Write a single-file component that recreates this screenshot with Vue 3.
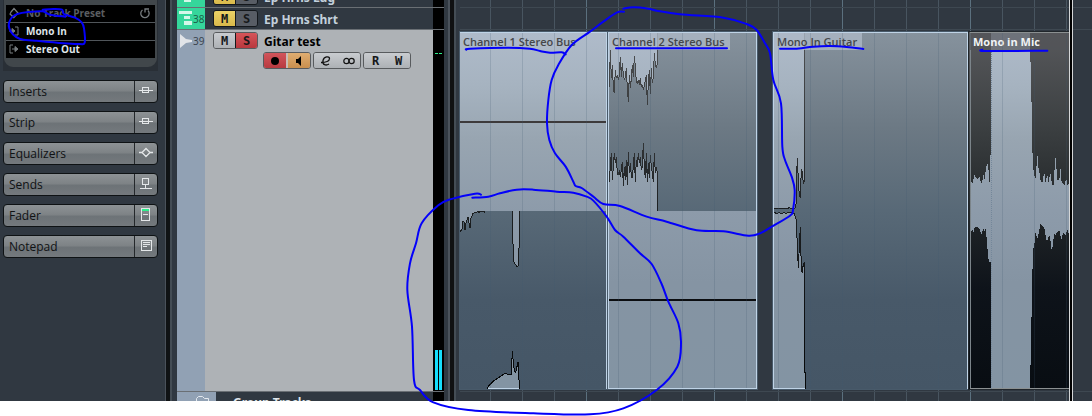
<script setup>
const routes = [
  { icon: 'preset', label: 'No Track Preset', muted: true },
  { icon: 'input', label: 'Mono In' },
  { icon: 'output', label: 'Stereo Out' },
]
const sections = ['Inserts', 'Strip', 'Equalizers', 'Sends', 'Fader', 'Notepad']

const clips = [
  {
    name: 'Channel 1 Stereo Bus', kind: 'plain', box: '180 96 441 1071',
    light: [
      '180,96 621,96 621,633 180,633',
      '180,633 180,695 186,688 186,665 192,665 195,690 198,670 204,652 210,685 213,655 219,640 228,638 240,634 255,633',
      '337,633 340,777 343,790 352,800 355,798 358,720 358,633',
      '262,1167 265,1158 280,1143 300,1130 315,1120 330,1125 334,1123 337,1053 340,1090 343,1110 346,1117 350,1110 352,1090 355,1085 358,1167',
    ],
    lines: [
      '180,695 186,688 186,665 192,665 195,690 198,670 204,652 210,685 213,655 219,640 228,638 234,634 237,638 240,634 252,634 255,638',
      '337,633 340,777 343,790 352,800 355,798 358,720 358,633',
      '262,1167 265,1158 280,1143 300,1130 315,1120 330,1125 334,1123 337,1053 340,1090 343,1110 346,1117 350,1110 352,1090 355,1085 358,1167',
    ],
    bars: [{ x: 180, y: 363, w: 438, c: '#3d3a3b' }],
    edges: ['180,97 621,97', '619,96 619,1167', '265,1165 357,1165'],
  },
  {
    name: 'Channel 2 Stereo Bus', kind: 'tinted', box: '54 96 447 1071',
    light: [
      '54,633 501,633 501,1167 54,1167',
      '54,96 203,96 202,150 199,205 196,195 193,160 190,230 187,250 184,205 181,282 178,210 175,250 172,315 169,225 166,240 163,255 160,270 157,255 154,262 151,235 148,255 145,240 142,250 139,245 136,200 133,168 130,230 127,195 124,235 121,265 118,225 115,305 112,265 109,205 106,230 103,240 100,225 97,190 94,230 91,170 88,225 85,240 82,225 79,235 76,210 73,280 70,262 67,195 64,235 61,150 58,262 54,262',
      '54,633 54,545 58,545 61,500 64,460 67,540 70,500 73,460 76,490 79,470 82,520 85,525 88,510 91,530 94,510 97,485 100,558 103,500 106,540 109,480 112,555 115,455 118,520 121,490 124,530 127,535 130,500 133,460 136,545 139,480 142,500 145,460 148,490 151,470 154,510 157,500 160,428 163,500 166,535 169,460 172,545 175,490 178,535 181,465 184,500 187,520 190,545 193,460 196,520 199,500 202,520 203,633',
    ],
    lines: [
      '203,100 203,186 199,205 196,195 193,160 190,230 187,250 184,205 181,282 178,210 175,250 172,315 169,225 166,240 163,255 160,270 157,255 154,262 151,235 148,255 145,240 142,250 139,245 136,200 133,168 130,230 127,195 124,235 121,265 118,225 115,305 112,265 109,205 106,230 103,240 100,225 97,190 94,230 91,170 88,225 85,240 82,225 79,235 76,210 73,280 70,262 67,195 64,235 61,150 58,262',
      '58,545 61,500 64,460 67,540 70,500 73,460 76,490 79,470 82,520 85,525 88,510 91,530 94,510 97,485 100,558 103,500 106,540 109,480 112,555 115,455 118,520 121,490 124,530 127,535 130,500 133,460 136,545 139,480 142,500 145,460 148,490 151,470 154,510 157,500 160,428 163,500 166,535 169,460 172,545 175,490 178,535 181,465 184,500 187,520 190,545 193,460 196,520 199,500 202,520 203,633',
    ],
    bars: [{ x: 57, y: 897, w: 441, c: '#0b0d10' }],
    edges: ['54,97 501,97', '55,96 55,1167', '499,96 499,1167', '54,1165 501,1165'],
  },
  {
    name: 'Mono In Guitar', kind: 'tinted', box: '39 96 585 1071',
    light: [
      '39,96 134,96 133,545 130,550 127,515 124,508 121,592 118,590 115,540 112,475 109,550 109,605 106,624 39,626',
      '39,640 103,640 109,660 112,740 115,804 118,740 121,680 124,810 127,820 130,790 133,788 134,1118 137,1167 39,1167',
    ],
    lines: [
      '134,100 133,545 130,550 127,515 124,508 121,592 118,590 115,540 112,475 109,550 109,605 106,624 90,624 87,621 84,626 72,624 69,626 60,624 54,626 42,626',
      '42,638 51,640 57,637 63,641 72,638 78,640 87,638 103,640 109,660 112,740 115,804 118,740 121,680 124,810 127,820 130,790 133,788 134,1118 137,1118 137,1167',
    ],
    bars: [],
    edges: ['39,97 624,97', '40,96 40,1167', '622,96 622,1167', '39,1165 135,1165'],
  },
  {
    name: 'Mono in Mic', kind: 'dark', box: '117 96 303 1071',
    light: [
      '123,545 127,550 130,540 133,525 142,538 148,530 154,550 158,538 160,522 163,540 168,505 172,489 175,498 177,545 180,545 181,465 184,465 184,99 301,99 301,165 304,275 307,447 310,507 316,540 319,505 322,462 325,500 328,515 331,540 337,548 343,516 346,548 352,522 355,550 361,519 364,540 370,563 373,520 376,468 379,500 382,540 388,540 391,501 394,540 397,550 403,556 406,545 409,537 412,556 418,550 418,705 412,690 406,705 400,697 397,705 394,720 388,690 382,697 376,705 373,700 370,720 367,747 363,745 361,715 358,705 352,720 349,720 343,685 340,680 331,670 328,690 322,717 316,697 313,735 310,745 309,805 306,810 306,950 303,955 303,1095 300,1095 300,1167 183,1167 183,787 177,787 174,765 171,730 168,690 165,682 163,697 160,685 154,703 150,690 142,680 134,683 130,697 127,687 123,695',
    ],
    lines: [], bars: [],
    edges: ['120,97 420,97', '121,99 121,1164', '120,1165 420,1165'],
  },
]

// Freehand pen marks: each stroke is a point list with its own horizontal origin.
const strokes = [
  { x: 0, p: [[128,29],[160,27],[186,29],[192,42],[225,53],[245,67],[252,85],[254,128],[238,132],[190,130],[105,122],[60,117],[38,102],[28,85],[27,68],[36,52],[52,42],[85,36],[128,34],[150,44],[196,50]] },
  { x: 1200, p: [[199,149],[210,146],[325,143],[390,146],[420,153],[450,158],[485,157],[497,163]] },
  { x: 1770, p: [[102,35],[80,38],[40,65],[0,95],[-55,135],[-95,195],[-115,240],[-125,300],[-129,370],[-122,420],[-105,460],[-73,500],[-50,545],[-43,558],[-25,564],[10,590],[40,612],[90,618],[170,650],[230,665],[320,691],[400,694],[475,707],[510,700],[545,680],[600,647],[609,630],[614,570],[605,530],[585,480],[577,440],[573,310],[550,240],[540,160],[525,130],[500,90],[470,72],[400,53],[270,43],[200,32],[175,26],[130,22],[100,26]] },
  { x: 1770, p: [[-353,593],[-305,590],[-270,580],[-220,569],[-170,569],[-100,575],[-50,578],[-10,590],[10,602],[50,650],[75,690],[100,710],[150,760],[185,792],[215,852],[235,905],[265,970],[273,1030],[262,1100],[200,1170],[100,1225],[0,1243],[-170,1240],[-365,1230],[-470,1207],[-510,1170],[-528,1140],[-534,980],[-548,870],[-540,790],[-522,730],[-505,670],[-455,616],[-420,598],[-345,581],[-327,584]] },
  { x: 1770, p: [[78,145],[411,145]] },
  { x: 2280, p: [[60,146],[105,146],[160,140],[210,138],[260,141],[310,147]] },
  { x: 2790, p: [[157,149],[168,153],[352,152]] },
]
function smooth({ x, p }) {
  const q = p.map(([a, b]) => [a + x, b])
  let d = `M${q[0]}`
  for (let i = 0; i < q.length - 1; i++) {
    const a = q[i - 1] || q[i], b = q[i], c = q[i + 1], e = q[i + 2] || c
    d += `C${b[0] + (c[0] - a[0]) / 6},${b[1] + (c[1] - a[1]) / 6} ${c[0] - (e[0] - b[0]) / 6},${c[1] - (e[1] - b[1]) / 6} ${c}`
  }
  return d
}
</script>

<template>
  <div class="page">
    <main class="daw">
      <aside class="inspector">
        <section class="rack">
          <div class="routing">
            <button v-for="r in routes" :key="r.label" class="route" :class="{ muted: r.muted }">
              <svg width="12" height="12" viewBox="0 0 12 12" fill="none" stroke="currentColor">
                <path v-if="r.icon === 'preset'" d="M3 5 6 1.500 10 6 6 10.500 2 7z M3 8 6 11" stroke-width="1.200" />
                <template v-else-if="r.icon === 'input'"><path d="M7 2h3v8H7M1 6h5" /><path d="M4 3.500 7 6 4 8.500z" fill="currentColor" /></template>
                <template v-else><path d="M5 2H2v8h3M4 6h4" /><path d="M7 3.500 10 6 7 8.500z" fill="currentColor" /></template>
              </svg>
              <span>{{ r.label }}</span>
              <svg v-if="r.muted" class="reload" width="12" height="12" viewBox="0 0 12 12" fill="none" stroke="currentColor" stroke-width="1.300"><path d="M3.500 3A4.200 4.200 0 1 0 9 3.500M6 5.500V2H10" /></svg>
            </button>
          </div>
        </section>
        <nav class="sections">
          <button v-for="s in sections" :key="s" class="section">
            <span class="section-name">{{ s }}</span>
            <span class="section-icon">
              <svg width="16" height="15" viewBox="0 0 16 15" fill="none" stroke="#e4e7e9" shape-rendering="crispEdges">
                <path v-if="s === 'Inserts' || s === 'Strip'" d="M1 7.500H15M4.500 4.500h6v5h-6z" />
                <g v-else-if="s === 'Equalizers'" shape-rendering="auto"><path d="M1 7.500h3M12 7.500h3M8 3.500 12 7.500 8 11.500 4 7.500z" stroke-width="1.300" /></g>
                <path v-else-if="s === 'Sends'" d="M4.500 2.500h6v6h-6zM7.500 9v3M2 12.500h12" />
                <g v-else-if="s === 'Fader'"><path d="M3.500 1.500h8v12h-8zM5 7.500h5" /><path d="M4 3h7" stroke="#2df08c" stroke-width="2" /></g>
                <path v-else d="M3.500 2.500h10v10h-10zM5 4.500h7M5 6.500h7M5 8.500h4" />
              </svg>
            </span>
          </button>
        </nav>
      </aside>
      <div class="divider"></div>

      <section class="tracks">
        <article class="track cut">
          <div class="color green"><svg width="16" height="13" viewBox="0 0 16 13" fill="#d5f7e9"><path d="M2 0h12v3H2zM6 5h7v3H6zM6 10h7v3H6z" /></svg></div>
          <div class="controls">
            <div class="top"><div class="pair"><button class="mute on">M</button><button>S</button></div><span class="name">Ep Hrns Lug</span></div>
          </div>
          <div class="meter"></div>
        </article>
        <article class="track">
          <div class="color green"><svg width="16" height="14" viewBox="0 0 16 14" fill="#d5f7e9"><path d="M1 0h13v3H1zM6 5h6v3H6zM6 10h8v4H6z" /></svg><span>38</span></div>
          <div class="controls">
            <div class="top"><div class="pair"><button class="mute on">M</button><button>S</button></div><span class="name">Ep Hrns Shrt</span></div>
          </div>
          <div class="meter"></div>
        </article>
        <article class="track selected">
          <div class="color"><svg width="16" height="16" viewBox="0 0 16 16" fill="#e1e4e8"><path d="M2 1 8 6 14 7v2L8 10 2 15z" /></svg><span>39</span></div>
          <div class="controls">
            <div class="top"><div class="pair"><button>M</button><button class="solo on">S</button></div><span class="name">Gitar test</span></div>
            <div class="extra">
              <div class="pair"><button class="rec" aria-label="Record"><svg width="12" height="12" viewBox="0 0 12 12"><circle cx="6" cy="6" r="4" /></svg></button><button class="mon" aria-label="Monitor"><svg width="12" height="12" viewBox="0 0 12 12"><path d="M3 4h2l3-3v10L5 8H3z" /></svg></button></div>
              <div class="pair"><button aria-label="Edit"><svg width="12" height="12" viewBox="0 0 12 12" fill="none" stroke="#111" stroke-width="1.300"><path d="M1 7.500C6 7.500 9.500 6 9.500 3.500 9.500 1 4 1 3 5.500c-.8 4.500 3 5.500 6 3.500" /></svg></button><button aria-label="Stereo"><svg width="12" height="12" viewBox="0 0 12 12" fill="none" stroke="#111" stroke-width="1.200"><circle cx="3.500" cy="6" r="2.700" /><circle cx="8.500" cy="6" r="2.700" /></svg></button></div>
              <div class="pair"><button>R</button><button>W</button></div>
            </div>
          </div>
          <div class="meter live"><i></i><i></i></div>
        </article>
        <article class="group">
          <div class="folder"><svg width="16" height="12" viewBox="0 0 16 12" fill="none" stroke="#e4e9ef"><path d="M1.500 11.500v-9l2-2h4l2 2h4v9z" /></svg></div>
          <span class="name">Group Tracks</span>
          <div class="meter"></div>
        </article>
      </section>
      <div class="divider right"></div>

      <section class="timeline">
        <div class="lane">
          <figure v-for="(c, i) in clips" :key="c.name" class="clip" :class="[c.kind, 'c' + i]">
            <svg :viewBox="c.box" preserveAspectRatio="none" shape-rendering="crispEdges">
              <rect x="0" y="96" width="700" height="1071" :fill="c.kind === 'dark' ? 'url(#night)' : 'url(#slate)'" />
              <polygon v-for="(p, k) in c.light" :key="'a' + k" :points="p" fill="url(#pale)" />
              <polyline v-for="(p, k) in c.edges" :key="'e' + k" :points="p" fill="none" :stroke="c.kind === 'dark' ? '#8b9091' : '#bfd3e6'" stroke-width="3" />
              <polyline v-for="(p, k) in c.lines" :key="'l' + k" :points="p" fill="none" stroke="url(#ink)" stroke-width="3" stroke-linejoin="bevel" />
              <rect v-for="(b, k) in c.bars" :key="'b' + k" :x="b.x" :y="b.y" :width="b.w" height="6" :fill="b.c" />
              <path v-if="c.kind === 'dark'" d="M184 156V1167" stroke="#74879a" stroke-width="3" stroke-dasharray="3 3" />
            </svg>
            <figcaption>{{ c.name }}</figcaption>
          </figure>
        </div>
        <div class="cursor"></div>
      </section>
    </main>

    <svg class="marks" viewBox="0 0 3276 1248" preserveAspectRatio="none" fill="none">
      <defs>
        <linearGradient id="pale" gradientUnits="userSpaceOnUse" x1="0" y1="96" x2="0" y2="1167"><stop offset="0" stop-color="#afbbca" /><stop offset=".15" stop-color="#a6b3c0" /><stop offset=".3" stop-color="#98a5b1" /><stop offset=".5" stop-color="#8d9baa" /><stop offset=".7" stop-color="#8594a3" /><stop offset="1" stop-color="#8394a3" /></linearGradient>
        <linearGradient id="slate" gradientUnits="userSpaceOnUse" x1="0" y1="96" x2="0" y2="1167"><stop offset="0" stop-color="#86929d" /><stop offset=".27" stop-color="#6c7984" /><stop offset=".5" stop-color="#586977" /><stop offset=".75" stop-color="#485969" /><stop offset="1" stop-color="#455666" /></linearGradient>
        <linearGradient id="night" gradientUnits="userSpaceOnUse" x1="0" y1="96" x2="0" y2="1167"><stop offset="0" stop-color="#58595c" /><stop offset=".27" stop-color="#3b3f41" /><stop offset=".5" stop-color="#222628" /><stop offset=".72" stop-color="#0e131a" /><stop offset="1" stop-color="#080d12" /></linearGradient>
        <linearGradient id="ink" gradientUnits="userSpaceOnUse" x1="0" y1="96" x2="0" y2="1167"><stop offset="0" stop-color="#505254" /><stop offset=".5" stop-color="#1c1f21" /><stop offset="1" stop-color="#050708" /></linearGradient>
      </defs>
      <path v-for="(s, i) in strokes" :key="i" :d="smooth(s)" />
    </svg>
  </div>
</template>

<style>
body { background: #fff; }
</style>

<style scoped>
* { box-sizing: border-box; }
button { margin: 0; padding: 0; border: 0; background: none; font: inherit; color: inherit; }
.page { position: relative; padding-bottom: 15px; font-family: "Noto Sans", "Open Sans", sans-serif; font-size: 11px; }
.daw { display: flex; background: #303841; overflow: hidden; }
.marks { position: absolute; inset: 0; width: 100%; height: 100%; pointer-events: none; }
.marks path { stroke: #0400fa; stroke-width: 6; stroke-linecap: round; stroke-linejoin: round; }

.inspector { flex: 0 0 165px; padding: 0 7px 0 3px; }
.rack { padding: 0 1px 4px; background: #292f36; }
.routing { border: solid #41474b; border-width: 5px 2px 9px; border-radius: 0 0 9px 9px; background: #000; }
.route { display: flex; align-items: center; gap: 6px; width: 100%; height: 18px; padding: 0 4px 1px 2px; color: #777c7f; border-bottom: 1px solid #51565a; text-align: left; font: bold 10px/16px "Open Sans", sans-serif; }
.route:last-child { height: 17px; border-bottom: 0; }
.route span { flex: 1; color: #dfe4e8; }
.route.muted span { color: #5b5e60; }
.sections { display: flex; flex-direction: column; gap: 8px; padding-top: 9px; }
.section { display: flex; height: 23px; border: 1px solid #0e1214; border-radius: 4px; background: linear-gradient(#8d9295, #7e8386 45%, #6d7377 55%, #74797d); color: #101214; text-align: left; }
.section-name { flex: 1; padding-left: 5px; font-size: 12px; font-family: "Open Sans", sans-serif; line-height: 22px; }
.section-icon { display: flex; justify-content: center; width: 23px; height: 21px; padding-top: 2px; border-left: 1px solid #24282b; }

.divider { flex: 0 0 12px; background: linear-gradient(90deg, #4a525b 1px, #101315 1px 5px, #444d55 5px 7px, #303841 7px); }
.divider.right { flex-basis: 16px; background: linear-gradient(90deg, #303841 4px, #4a525b 4px 6px, #101112 6px 10px, #444d55 10px 12px, #303841 12px); }

.tracks { flex: 0 0 267px; }
.track { display: flex; height: 22px; border-bottom: 1px solid #6a6f74; color: #c3d0dc; }
.track.cut { height: 8px; align-items: flex-end; overflow: hidden; }
.track.cut > * { height: 21px; }
.color { display: flex; gap: 1px; flex: 0 0 28px; padding: 3px 0 0 1px; background: #91a1b4; color: #3b444e; font-size: 10px; line-height: 16px; }
.color.green { background: #35d69b; color: #1b5f48; }
.color span { margin-left: -2px; }
.controls { flex: 1; padding: 2px 0 0 8px; }
.top { display: flex; align-items: center; gap: 6px; height: 17px; }
.name { padding-top: 1px; font: bold 12px/17px "Noto Sans", sans-serif; }
.pair { display: flex; width: 45px; height: 17px; border: 1px solid #14181c; border-radius: 3px; overflow: hidden; }
.pair button { flex: 1; display: flex; align-items: center; justify-content: center; padding-top: 1px; background: #585d65; color: #15181a; font: bold 12px/14px "DejaVu Sans Mono", monospace; }
.pair button + button { border-left: 1px solid #14181c; }
.pair .mute.on { background: linear-gradient(#ecd266, #d9b94b); }
.pair .solo.on { background: linear-gradient(#d65459, #b9383e); }
.selected { height: 362px; background: #aeb2b6; color: #000; }
.selected .pair { border-color: #585b5e; }
.selected .pair button { background: linear-gradient(#c9ccd0, #adb1b5); }
.selected .pair .solo.on { background: linear-gradient(#d65459, #b9383e); }
.extra { display: flex; gap: 2px; padding: 3px 0 0 50px; }
.extra .pair { width: 48px; }
.extra .pair button + button { border-left: 0; }
.selected .pair .rec { background: linear-gradient(#d2555b, #b83a40); }
.selected .extra .pair .mon { background: linear-gradient(#e0ad71, #c98f4e); border-left: 2px solid #c8bdb6; }
.meter { display: flex; gap: 1px; align-items: flex-end; flex: 0 0 11px; padding: 0 2px 1px; background: #000; }
.live i { flex: 1; height: 337px; background: linear-gradient(#2df08c 1px, transparent 1px 297px, #16dcfb 297px); }
.group { display: flex; height: 9px; overflow: hidden; color: #dfe5ea; }
.folder { flex: 0 0 39px; padding: 4px 0 0 18px; background: #91a1b4; }
.folder svg { display: block; }
.group .name { flex: 1; padding: 2px 0 0 17px; }

.timeline { position: relative; flex: 1; padding-top: 32px; background:
  linear-gradient(#3e4851, #3e4851) 0 7px / 100% 1px no-repeat,
  linear-gradient(#3e4851, #3e4851) 0 29px / 100% 1px no-repeat,
  linear-gradient(#3e4851, #3e4851) 0 391px / 100% 1px no-repeat,
  linear-gradient(90deg, #5b707e 1px, transparent 1px) 126px 0 / 128px 100%,
  linear-gradient(90deg, #485560 1px, transparent 1px) 30px 0 / 32px 100%, #303841; }
.lane { position: relative; display: grid; grid-template-columns: 147fr 1fr 149fr 16fr 195fr 1fr 101fr 22fr; }
.lane::after { content: ""; position: absolute; inset: 1px 0; background: linear-gradient(90deg, rgba(64, 88, 110, .2) 1px, transparent 1px) 30px 0 / 32px 100%; }
.clip { position: relative; margin: 0; box-shadow: 0 0 0 1px #485a6a; }
.clip svg { display: block; width: 100%; height: 357px; }
.c1 { grid-column: 3; }
.c2 { grid-column: 5; }
.c3 { grid-column: 7; }
.clip figcaption { position: absolute; top: 1px; left: 0; height: 17px; padding: 0 5px 0 3px; color: #45474a; font: 600 11px/17px "Open Sans", sans-serif; white-space: nowrap; }
.clip.tinted figcaption { left: 1px; background: rgba(172, 184, 198, .8); }
.clip.dark { box-shadow: 0 0 0 1px #20262b; }
.clip.dark figcaption { left: 1px; right: 1px; background: rgba(82, 84, 88, .7); color: #f0f3f5; font-weight: bold; }
.cursor { position: absolute; top: 0; bottom: 0; left: 96.36%; width: 4px; background: #000; border: solid #d5d7d8; border-width: 0 1px; }
</style>
